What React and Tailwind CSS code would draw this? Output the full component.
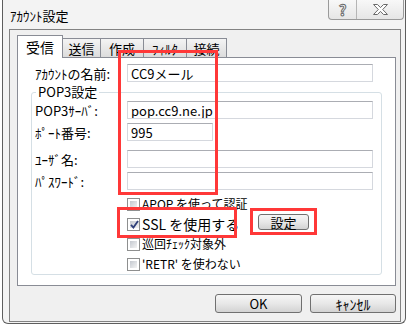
import { useState } from "react";

const Check = ({ checked }) => (
  <span className="w-[13px] h-[13px] border border-[#8e8f8f] bg-white p-[2px] flex shrink-0">
    <span className="flex-1 bg-linear-to-br from-[#c4c8cf] to-[#f4f4f4] flex items-center justify-center">
      {checked && (
        <svg width="9" height="9" viewBox="0 0 9 9">
          <path d="M1 4.8 L3.4 7.5 L8 1" fill="none" stroke="#2f3f7a" strokeWidth="1.8" />
        </svg>
      )}
    </span>
  </span>
);

const Field = ({ value, className = "" }) => (
  <input
    readOnly
    defaultValue={value}
    className={`h-[18px] border border-[#d5d8de] border-t-[#abadb3] bg-white pl-[3px] text-[13px] leading-[16px] text-black outline-none ${className}`}
  />
);

const Row = ({ label, children, className = "" }) => (
  <div className={`flex items-center h-[18px] ${className}`}>
    <span className="w-[92px] text-[13px] leading-none text-black">{label}</span>
    {children}
  </div>
);

const CheckRow = ({ label, checked, children, labelClass = "text-[12px]" }) => (
  <div className="flex items-center h-[20px] pl-[95px]">
    <Check checked={checked} />
    <span className={`ml-[2px] leading-none text-black ${labelClass}`}>{label}</span>
    {children}
  </div>
);

const WinButton = ({ children, className = "" }) => (
  <button className={`rounded-[3px] border border-[#707070] bg-linear-to-b from-[#f6f6f6] via-[#e8e8e8] to-[#d3d3d3] text-black leading-none flex items-center justify-center ${className}`}>
    {children}
  </button>
);

const tabs = ["送信", "作成", "ﾌｨﾙﾀ", "接続"];
const tabWidths = ["w-[38px]", "w-[43px]", "w-[43px]", "w-[40px]"];

export default function App() {
  const [active] = useState("受信");

  return (
    <div className="relative w-[407px] h-[326px] bg-white overflow-hidden font-['Noto_Sans_CJK_JP',sans-serif]">
      {/* window */}
      <div className="ml-[2px] w-[404px] h-[324px] border border-t-0 border-[#5e5e5e] rounded-b-[6px] bg-[#f3f3f3] flex flex-col">
        {/* title bar */}
        <div className="h-[29px] flex justify-between items-start shrink-0">
          <span className="pl-[7px] pt-[8px] text-[13px] leading-[16px] text-black">ｱｶｳﾝﾄ設定</span>
          <div className="mr-[1px] flex h-[20px] border border-t-0 border-[#9a9a9a] rounded-b-[4px] bg-linear-to-b from-[#f8f8f8] to-[#e6e6e6]">
            <span className="w-[27px] flex items-center justify-center text-[15px] font-bold leading-none text-white [-webkit-text-stroke:1px_#6a6a6a]">?</span>
            <span className="w-[47px] border-l border-[#b5b5b5] flex items-center justify-center">
              <svg width="15" height="11" viewBox="0 0 15 11">
                <path
                  d="M0.5 0.5 L4.5 0.5 L7.5 3.6 L10.5 0.5 L14.5 0.5 L9.7 5.5 L14.5 10.5 L10.5 10.5 L7.5 7.4 L4.5 10.5 L0.5 10.5 L5.3 5.5 Z"
                  fill="#fff"
                  stroke="#6a6a6a"
                />
              </svg>
            </span>
          </div>
        </div>

        {/* client */}
        <div className="ml-[6px] mr-[4px] h-[293px] border border-[#828282] bg-[#f0f0f0] pl-[7px] pr-[4px] flex flex-col">
          {/* tabs */}
          <div className="mt-[8px] h-[19px] flex items-end shrink-0">
            <span className="relative z-10 w-[46px] h-[23px] -mb-px bg-white border border-b-0 border-[#898c95] flex items-center justify-center text-[14px] leading-none text-black">
              {active}
            </span>
            {tabs.map((t, i) => (
              <span
                key={t}
                className={`${tabWidths[i]} h-[19px] border-t border-r border-[#898c95] bg-linear-to-b from-[#f4f4f4] to-[#dcdcdc] flex items-center justify-center text-[13px] leading-none text-black`}
              >
                {t}
              </span>
            ))}
          </div>

          {/* tab panel */}
          <div className="h-[229px] border border-[#898c95] bg-white flex flex-col shrink-0">
            <Row label="ｱｶｳﾝﾄの名前:" className="mt-[6px] pl-[17px] pr-[22px]">
              <Field value="CC9メール" className="flex-1" />
            </Row>

            <fieldset className="mt-[2px] mx-[13px] border border-[#d5dfe5] rounded-[3px]">
              <legend className="ml-[4px] px-[2px] text-[13px] leading-[16px] text-black">POP3設定</legend>
              <div className="pl-[3px] pr-[8px]">
                <Row label="POP3ｻｰﾊﾞ:" className="mt-[1px]">
                  <Field value="pop.cc9.ne.jp" className="flex-1" />
                </Row>
                <Row label="ﾎﾟｰﾄ番号:" className="mt-[4px]">
                  <Field value="995" className="w-[86px]" />
                </Row>
                <Row label="ﾕｰｻﾞ名:" className="mt-[9px]">
                  <Field value="" className="flex-1" />
                </Row>
                <Row label="ﾊﾟｽﾜｰﾄﾞ:" className="mt-[4px]">
                  <Field value="" className="flex-1" />
                </Row>
              </div>
              <div className="mt-[4px]">
                <CheckRow label="APOP を使って認証" />
                <CheckRow label="SSL を使用する" checked labelClass="text-[14px] w-[116px]">
                  <WinButton className="w-[51px] h-[16px] -mt-[4px] text-[13px]">設定</WinButton>
                </CheckRow>
                <CheckRow label="巡回ﾁｪｯｸ対象外" />
                <CheckRow label="'RETR' を使わない" />
              </div>
            </fieldset>
          </div>

          {/* dialog buttons */}
          <div className="mt-[8px] flex justify-end gap-[8px]">
            <WinButton className="w-[87px] h-[19px] text-[13px]">OK</WinButton>
            <WinButton className="w-[86px] h-[19px] text-[14px]">ｷｬﾝｾﾙ</WinButton>
          </div>
        </div>
      </div>

      {/* red annotation boxes */}
      <div className="absolute left-[118px] top-[50px] w-[100px] h-[145px] border-[3px] border-[#ff3838]" />
      <div className="absolute left-[117px] top-[207px] w-[120px] h-[31px] border-[3px] border-[#ff3838]" />
      <div className="absolute left-[250px] top-[208px] w-[67px] h-[27px] border-[3px] border-[#ff3838]" />
    </div>
  );
}
